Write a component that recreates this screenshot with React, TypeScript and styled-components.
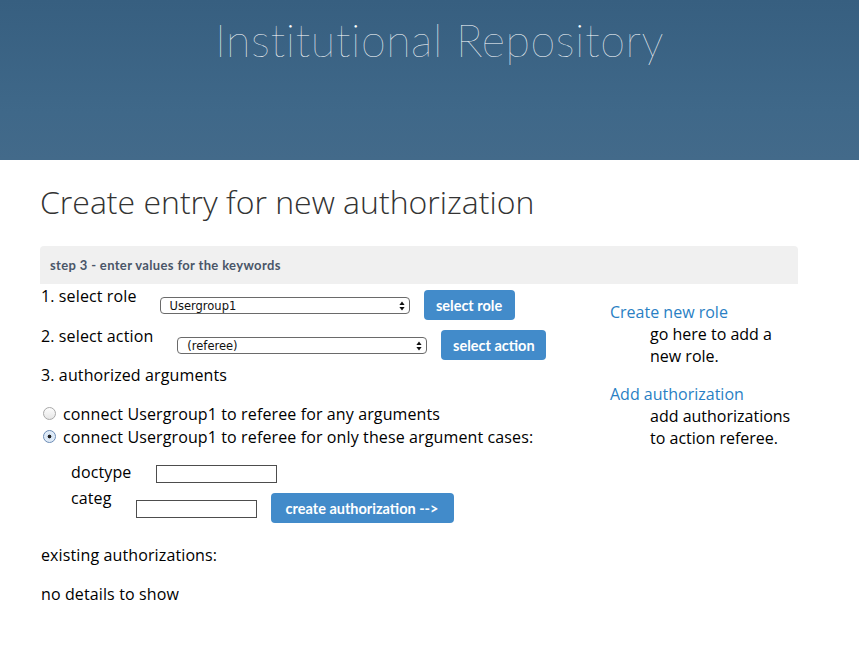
import React from "react";
import styled, { createGlobalStyle } from "styled-components";

const Global = createGlobalStyle`
  html, body { margin: 0; padding: 0; background: #fff; }
  body { font-family: "Open Sans", "DejaVu Sans", sans-serif; color: #000; }
`;

const Header = styled.header`
  height: 160px;
  background: linear-gradient(180deg, #375f80 0%, #3f6889 70%, #436a8a 100%);
  display: flex;
  justify-content: center;
  align-items: flex-start;
  padding-left: 20px;
`;

const SiteTitle = styled.h1`
  margin: 13px 0 0 0;
  font-family: Lato, "Open Sans", sans-serif;
  font-weight: 200;
  font-size: 45px;
  line-height: 54px;
  color: #fff;
  letter-spacing: 0.5px;
`;

const Main = styled.main`
  padding: 0 61px 0 40px;
`;

const PageTitle = styled.h2`
  margin: 20px 0 0 0;
  font-family: "Open Sans", sans-serif;
  font-weight: 300;
  font-size: 32px;
  line-height: 44px;
  color: #333;
`;

const StepBar = styled.div`
  margin-top: 22px;
  height: 38px;
  background: #f0f0f0;
  border-radius: 4px 4px 0 0;
  display: flex;
  align-items: center;
  padding-left: 10px;
  font-family: Lato, sans-serif;
  font-weight: 700;
  font-size: 13px;
  letter-spacing: 0.35px;
  color: #4a5668;
`;

const Content = styled.div`
  display: flex;
  align-items: flex-start;
`;

const FormCol = styled.div`
  flex: 1;
  letter-spacing: 0.12px;
`;

const Aside = styled.aside`
  width: 188px;
  padding-top: 17px;
`;

const Row = styled.div<{ $top: number }>`
  display: flex;
  align-items: flex-start;
  margin-top: ${(p) => p.$top}px;
  height: 30px;
`;

const Label = styled.span<{ $top?: number }>`
  font-size: 16px;
  line-height: 22px;
  margin-left: 1px;
  margin-top: ${(p) => p.$top ?? 0}px;
`;

const SelectBox = styled.div<{ $left: number }>`
  margin-left: ${(p) => p.$left}px;
  margin-top: 7px;
  width: 250px;
  height: 17px;
  box-sizing: border-box;
  border: 1px solid #6a6a6a;
  border-radius: 4px;
  display: flex;
  align-items: center;
  justify-content: space-between;
  padding: 0 4px 0 9px;
  font-family: "DejaVu Sans", sans-serif;
  font-size: 11.5px;
  letter-spacing: 0;
  color: #111;
  background: #fff;
`;

const Button = styled.button<{ $left: number; $width: number; $top?: number }>`
  margin-left: ${(p) => p.$left}px;
  margin-top: ${(p) => p.$top ?? 0}px;
  width: ${(p) => p.$width}px;
  height: 30px;
  flex-shrink: 0;
  border: none;
  border-radius: 4px;
  background: #428bca;
  color: #fff;
  font-family: Lato, sans-serif;
  font-weight: 700;
  font-size: 14.5px;
  letter-spacing: 0;
  padding: 0;
  cursor: pointer;
`;

const Text = styled.div<{ $top: number }>`
  margin-top: ${(p) => p.$top}px;
  margin-left: 1px;
  font-size: 16px;
  line-height: 22px;
`;

const RadioGroup = styled.div`
  margin-top: 16px;
`;

const RadioRow = styled.div`
  display: flex;
  align-items: center;
  height: 23px;
  font-size: 16px;
`;

const Radio = styled.span<{ $checked?: boolean }>`
  width: 13px;
  height: 13px;
  box-sizing: border-box;
  border-radius: 50%;
  border: 1px solid ${(p) => (p.$checked ? "#6a8bb5" : "#a8a8a8")};
  background: ${(p) =>
    p.$checked
      ? "radial-gradient(circle, #222 0 1.6px, #d5e4f5 2.2px, #eef4fb 100%)"
      : "linear-gradient(#fdfdfd, #e6e6e6)"};
  margin: 0 7px 0 3px;
  flex-shrink: 0;
`;

const ArgRow = styled.div<{ $top: number }>`
  display: flex;
  align-items: flex-start;
  margin-top: ${(p) => p.$top}px;
  padding-left: 30px;
`;

const TextInput = styled.div<{ $left: number; $top: number }>`
  margin-left: ${(p) => p.$left}px;
  margin-top: ${(p) => p.$top}px;
  width: 121px;
  height: 18px;
  flex-shrink: 0;
  box-sizing: border-box;
  border: 1px solid #4d4d4d;
  background: #fff;
`;

const AsideLink = styled.a`
  display: block;
  color: #2a7fc4;
  font-size: 16px;
  line-height: 22px;
  text-decoration: none;
`;

const AsideText = styled.div`
  padding-left: 40px;
  font-size: 16px;
  line-height: 22px;
  margin-bottom: 16px;
`;

const Arrows = () => (
  <svg width="6" height="10" viewBox="0 0 6 10">
    <path d="M3 0.5 L5.6 4 H0.4 Z" fill="#111" />
    <path d="M3 9.5 L5.6 6 H0.4 Z" fill="#111" />
  </svg>
);

export default function App() {
  return (
    <>
      <Global />
      <Header>
        <SiteTitle>Institutional Repository</SiteTitle>
      </Header>
      <Main>
        <PageTitle>Create entry for new authorization</PageTitle>
        <StepBar>step 3 - enter values for the keywords</StepBar>
        <Content>
          <FormCol>
            <Row $top={6}>
              <Label $top={-5}>1. select role</Label>
              <SelectBox $left={23}>
                <span>Usergroup1</span>
                <Arrows />
              </SelectBox>
              <Button $left={14} $width={91}>select role</Button>
            </Row>
            <Row $top={10}>
              <Label $top={-5}>2. select action</Label>
              <SelectBox $left={24}>
                <span>(referee)</span>
                <Arrows />
              </SelectBox>
              <Button $left={14} $width={105}>select action</Button>
            </Row>
            <Text $top={4}>3. authorized arguments</Text>
            <RadioGroup>
              <RadioRow>
                <Radio />
                connect Usergroup1 to referee for any arguments
              </RadioRow>
              <RadioRow>
                <Radio $checked />
                connect Usergroup1 to referee for only these argument cases:
              </RadioRow>
            </RadioGroup>
            <ArgRow $top={13}>
              <Label>doctype</Label>
              <TextInput $left={25} $top={4} />
            </ArgRow>
            <ArgRow $top={4}>
              <Label>categ</Label>
              <TextInput $left={24} $top={13} />
              <Button $left={14} $width={183} $top={6}>
                create authorization --&gt;
              </Button>
            </ArgRow>
            <Text $top={21}>existing authorizations:</Text>
            <Text $top={17}>no details to show</Text>
          </FormCol>
          <Aside>
            <AsideLink href="#">Create new role</AsideLink>
            <AsideText>
              go here to add a<br />new role.
            </AsideText>
            <AsideLink href="#">Add authorization</AsideLink>
            <AsideText>
              add authorizations<br />to action referee.
            </AsideText>
          </Aside>
        </Content>
      </Main>
    </>
  );
}
